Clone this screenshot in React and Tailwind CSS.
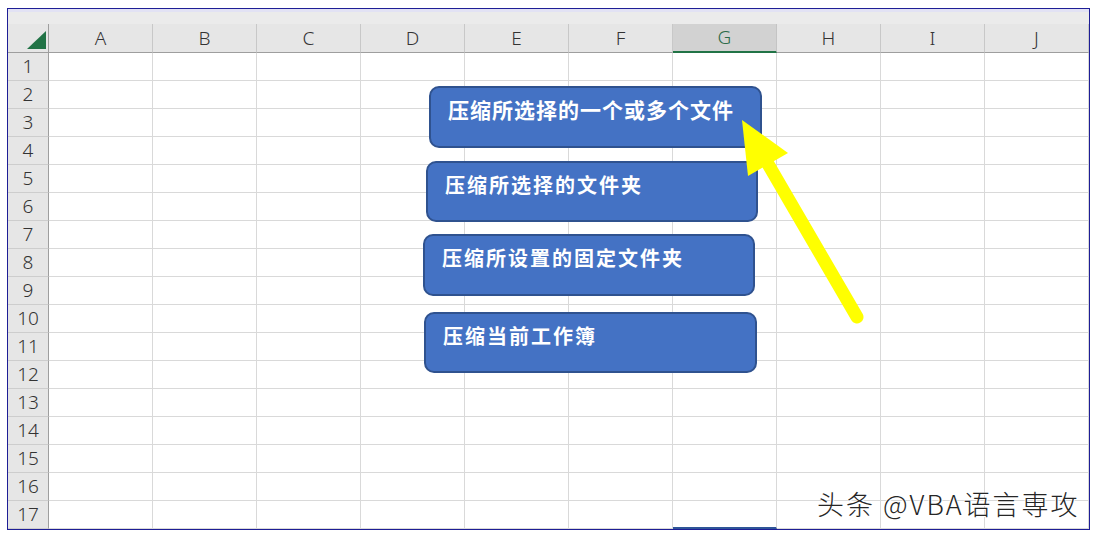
const cols = ['A', 'B', 'C', 'D', 'E', 'F', 'G', 'H', 'I', 'J'];
const rows = Array.from({ length: 17 }, (_, i) => i + 1);

const hdrFont = { fontFamily: '"Noto Sans", "Liberation Sans", sans-serif' };
const cjk = { fontFamily: '"Noto Sans CJK SC", "Noto Sans", sans-serif' };

function Btn({ left, top, w, h, size, text }) {
  return (
    <div
      className="absolute rounded-[10px] border-2 border-[#2f528f] bg-[#4472c4] text-white font-bold leading-none pl-[17px]"
      style={{ left, top, width: w, height: h, ...cjk }}
    >
      <div className={size === 'lg' ? 'pt-[11px] text-[21px] tracking-[1px] whitespace-nowrap' : 'pt-[12px] text-[20px] tracking-[2px] whitespace-nowrap'}>
        {text}
      </div>
    </div>
  );
}

export default function App() {
  return (
    <div className="relative w-[1098px] h-[535px] bg-white overflow-hidden pl-[7px] pt-[8px]">
      <div className="w-[1083px] border border-[#1e1e96] bg-white">
        <div className="h-[15px] bg-[#ebebeb] border-t-[3px] border-t-[#e2e2f4]" />
        <div className="flex h-[29px] bg-[#e6e6e6]" style={hdrFont}>
          <div className="w-[41px] shrink-0 border-r border-b border-r-[#9e9e9e] border-b-[#9e9e9e] flex items-end justify-end pr-[2px] pb-[3px]">
            <svg width="19" height="18" viewBox="0 0 19 18">
              <polygon points="0,18 19,18 19,0" fill="#217346" />
            </svg>
          </div>
          {cols.map((c) =>
            c === 'G' ? (
              <div
                key={c}
                className="w-[104px] shrink-0 bg-[#d2d2d2] border-r border-r-[#c4c4c4] border-b-2 border-b-[#217346] flex items-center justify-center text-[19px] font-light text-[#2d6b4a]"
              >
                {c}
              </div>
            ) : (
              <div
                key={c}
                className="w-[104px] shrink-0 border-r border-b border-r-[#c8c8c8] border-b-[#9e9e9e] flex items-center justify-center text-[19px] font-light text-[#333333]"
              >
                {c}
              </div>
            )
          )}
        </div>
        {rows.map((r) => (
          <div key={r} className="flex h-[28px]">
            <div
              className="w-[41px] shrink-0 bg-[#e6e6e6] border-r border-b border-r-[#9e9e9e] border-b-[#cdcdcd] flex items-center justify-center text-[19px] font-light text-[#333333]"
              style={hdrFont}
            >
              {r}
            </div>
            {cols.map((c) =>
              r === 17 && c === 'G' ? (
                <div key={c} className="w-[104px] shrink-0 border-r border-r-[#d9d9d9] border-b-2 border-b-[#2e5597]" />
              ) : (
                <div key={c} className="w-[104px] shrink-0 border-r border-b border-[#d9d9d9]" />
              )
            )}
          </div>
        ))}
      </div>

      <Btn left={429} top={86} w={333} h={62} size="lg" text="压缩所选择的一个或多个文件" />
      <Btn left={426} top={161} w={332} h={61} text="压缩所选择的文件夹" />
      <Btn left={423} top={234} w={332} h={62} text="压缩所设置的固定文件夹" />
      <Btn left={424} top={312} w={333} h={61} text="压缩当前工作簿" />

      <svg className="absolute left-0 top-0 pointer-events-none" width="1098" height="535" viewBox="0 0 1098 535">
        <line x1="768" y1="164" x2="857" y2="317" stroke="#ffff00" strokeWidth="13" strokeLinecap="round" />
        <polygon points="742,120 788,153 748,176" fill="#ffff00" />
      </svg>

      <div
        className="absolute left-[817px] top-[490px] text-[27px] leading-none tracking-[2px] text-[#262626] font-light whitespace-nowrap [text-shadow:1px_1px_0_#ffffff,-1px_0_0_#ffffff]"
        style={cjk}
      >
        头条 @VBA语言専攻
      </div>
    </div>
  );
}
